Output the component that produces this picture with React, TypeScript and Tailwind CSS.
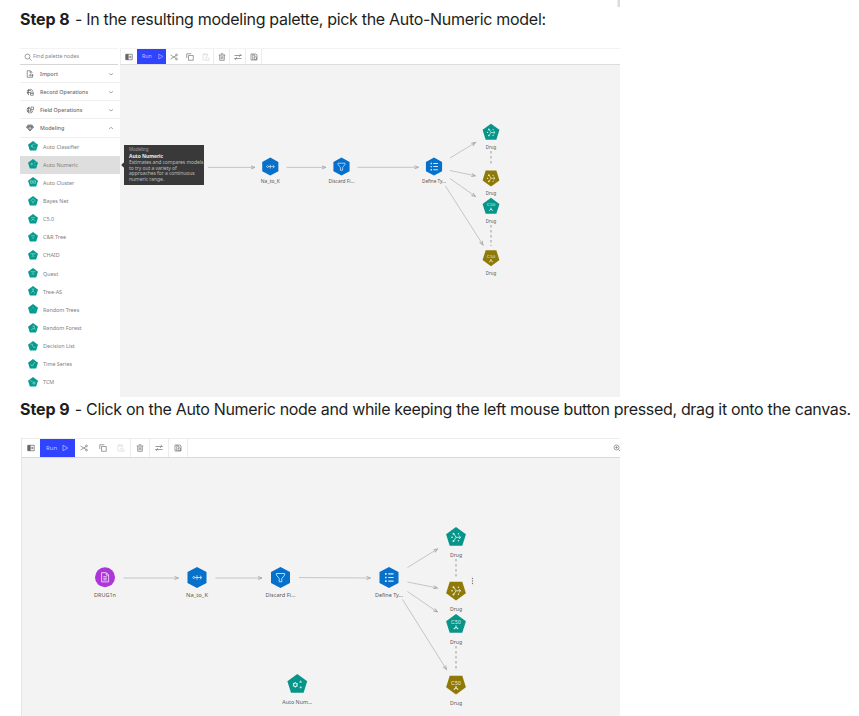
import type { ReactNode } from "react";

type Shape = "circle" | "hex" | "pent" | "nugget";
type Glyph = "doc" | "derive" | "filter" | "type" | "net" | "c50" | "gear";

const outlines: Record<Exclude<Shape, "circle">, string> = {
  hex: "0,-10.6 9.5,-5.4 9.5,5.4 0,10.6 -9.5,5.4 -9.5,-5.4",
  pent: "0,-10 9.9,-2.8 6.3,8.8 -6.3,8.8 -9.9,-2.8",
  nugget: "0,10 9.9,2.8 6.3,-8.8 -6.3,-8.8 -9.9,2.8",
};

function GlyphMark({ kind }: { kind: Glyph }) {
  switch (kind) {
    case "doc":
      return (
        <g>
          <path d="M-3.4-4.6H1.4L3.6-2.4V4.6H-3.4ZM1.2-4.4V-2.2H3.4" />
          <path d="M-1.6-.6H1.8M-1.6 1H1.8M-1.6 2.6H1.8" />
        </g>
      );
    case "derive":
      return (
        <g>
          <path d="M-2.6 0H4.6M2.9-1.8L4.8 0L2.9 1.8M0-2.3V2.3" />
          <path d="M-4.4 0L-3.2-1.3L-2 0L-3.2 1.3Z" />
        </g>
      );
    case "filter":
      return <path d="M-4.1-4H4.1V-2.4L1.3 1V4.3H-1.3V1L-4.1-2.4Z" />;
    case "type":
      return (
        <g>
          <path d="M-.8-3.6H4.6M-.8 0H4.6M-.8 3.6H4.6" strokeWidth="1.2" />
          <path d="M-4-3.6H-2.4M-4 0H-2.4M-4 3.6H-2.4" strokeWidth="1.7" />
        </g>
      );
    case "net":
      return (
        <g>
          <path d="M-2-3L0 .3L-2 3.6M0 .3H4.3M-4.6 .3H-3.4M2.8-1.5L4.8 .3L2.8 2.1" />
          <g fill="#fff" stroke="none">
            <circle cx="-2.5" cy="-3.3" r="1" />
            <circle cx="-2.5" cy="3.9" r="1" />
            <circle cx="-4" cy=".3" r=".7" />
            <circle cx="2.4" cy="-3.2" r=".7" />
            <circle cx="2.4" cy="3.8" r=".7" />
          </g>
        </g>
      );
    case "c50":
      return (
        <g>
          <text
            x="-4.9"
            y="0"
            fontSize="5"
            textLength="9.8"
            lengthAdjust="spacing"
            fontFamily="Liberation Sans, sans-serif"
            fill="#fff"
            stroke="none"
          >
            C50
          </text>
          <path d="M0 1.6V3.2L-2.2 5.2M0 3.2L2.2 5.2" strokeWidth="1.1" />
        </g>
      );
    case "gear":
      return (
        <g>
          <circle cx="-2" cy=".8" r="1.8" strokeWidth="1.1" />
          <path d="M-2-2V-.9M-2 2.5V3.6M-4.5-.6L-3.5 0M-.5 1.6L.5 2.2M-4.5 2.2L-3.5 1.6M-.5 0L.5-.6M2-1.9H4.6M3.3-3.4V-1.9M2.4 3.4H4.4M3.4 2.4V4.4" />
        </g>
      );
  }
}

interface NodeProps {
  x: number;
  y: number;
  shape: Shape;
  glyph: Glyph;
  color: string;
  label: string;
  labelWidth: number;
  scale: number;
  labelGap: number;
}

function FlowNode({ x, y, shape, glyph, color, label, labelWidth, scale, labelGap }: NodeProps) {
  return (
    <g>
      <g transform={`translate(${x} ${y}) scale(${scale})`}>
        {shape === "circle" ? <circle r="10" fill={color} /> : <polygon points={outlines[shape]} fill={color} />}
        <g fill="none" stroke="#fff" strokeWidth=".85" opacity=".85">
          <GlyphMark kind={glyph} />
        </g>
      </g>
      <text
        x={x - labelWidth / 2}
        y={y + labelGap}
        fontSize={6.1 * scale}
        textLength={labelWidth}
        lengthAdjust="spacingAndGlyphs"
        fontFamily="Noto Sans, sans-serif"
        fill="#585858"
      >
        {label}
      </text>
    </g>
  );
}

function Edge({ from, to }: { from: [number, number]; to: [number, number] }) {
  const angle = (Math.atan2(to[1] - from[1], to[0] - from[0]) * 180) / Math.PI;
  return (
    <g stroke="#bfbfbf" strokeWidth=".9" fill="none">
      <path d={`M${from[0]} ${from[1]}L${to[0]} ${to[1]}`} />
      <path d="M-4-1.5L0 0L-4 1.5" stroke="#a8a8a8" transform={`translate(${to[0]} ${to[1]}) rotate(${angle})`} />
    </g>
  );
}

function Dashes({ x, y1, y2 }: { x: number; y1: number; y2: number }) {
  return <path d={`M${x} ${y1}V${y2}`} stroke="#b0b0b0" strokeWidth="1.3" strokeDasharray="2.6 2.4" />;
}

const BLUE = "#0670cb";
const TEAL = "#079489";
const GOLD = "#8f7a07";

function Icon({ className = "", children }: { className?: string; children: ReactNode }) {
  return (
    <svg viewBox="0 0 16 16" fill="none" stroke="currentColor" strokeWidth="1.4" className={`size-2 shrink-0 ${className}`}>
      {children}
    </svg>
  );
}

const PaletteIcon = () => (
  <Icon className="text-[#666]">
    <path d="M1.5 2.5H14.5V13.5H1.5Z" />
    <path d="M2 3H6.5V13H2Z" fill="currentColor" />
    <path d="M8 8H13M10.5 5.5V10.5" />
  </Icon>
);
const CutIcon = () => (
  <Icon className="text-[#777]">
    <path d="M1 4L12.5 11M1 12L12.5 5" />
    <circle cx="13" cy="3.8" r="1.8" />
    <circle cx="13" cy="12.2" r="1.8" />
  </Icon>
);
const CopyIcon = () => (
  <Icon className="text-[#777]">
    <path d="M5 5H14.5V14.5H5ZM1.5 10V1.5H10.5" />
  </Icon>
);
const PasteIcon = () => (
  <Icon className="text-[#d8d8d8]">
    <path d="M7 14H2V2H11V6M5 2V4H8V2M8 8H11L14 11V14.5H8Z" />
  </Icon>
);
const TrashIcon = () => (
  <Icon className="text-[#6a6a6a]">
    <path d="M1.5 4H14.5M5.5 1.5H10.5M3.5 4V14.5H12.5V4M6.5 6.5V12M9.5 6.5V12" />
  </Icon>
);
const ArrangeIcon = () => (
  <Icon className="text-[#707070]">
    <path d="M1 5H15M11.5 2L15 5M15 11H1M4.5 14L1 11M11 5V7.5M5 8.5V11" />
  </Icon>
);
const NotesIcon = () => (
  <Icon className="text-[#777]">
    <path d="M2 2H12L14 4V14H2ZM5.5 2V14M8.5 8H13V13H8.5ZM8 2V6H11" />
  </Icon>
);

function RunButton({ className, iconClass }: { className: string; iconClass: string }) {
  return (
    <button className={`flex h-full shrink-0 items-center bg-[#3043ff] text-[#c3c9ff] ${className}`}>
      <span>Run</span>
      <Icon className={iconClass}>
        <path d="M4 2.5V13.5L13.5 8Z" />
      </Icon>
    </button>
  );
}

const cell = "flex h-full shrink-0 items-center justify-center";
const divider = "border-r border-[#ececec]";

function SmallToolbar() {
  return (
    <div className="flex h-[17px] border-b border-b-[#dcdcdc] border-t border-t-[#f3f3f3] bg-white">
      <div className={`${cell} w-[17px] border-l border-[#eee]`}><PaletteIcon /></div>
      <RunButton className="w-[29px] gap-[5px] pl-[5px] text-[5.3px]" iconClass="size-[7px]" />
      <div className={`${cell} w-4`}><CutIcon /></div>
      <div className={`${cell} w-4`}><CopyIcon /></div>
      <div className={`${cell} w-4 ${divider}`}><PasteIcon /></div>
      <div className={`${cell} w-4 ${divider}`}><TrashIcon /></div>
      <div className={`${cell} w-4 ${divider}`}><ArrangeIcon /></div>
      <div className={`${cell} w-4 ${divider}`}><NotesIcon /></div>
    </div>
  );
}

function LargeToolbar() {
  return (
    <div className="flex h-5 border-b border-b-[#d9d9d9] border-t border-t-[#ededed] bg-white">
      <div className={`${cell} w-[18px]`}><PaletteIcon /></div>
      <RunButton className="w-[35px] gap-1 pl-1.5 text-[6px]" iconClass="size-2" />
      <div className={`${cell} w-[18px]`}><CutIcon /></div>
      <div className={`${cell} w-[19px]`}><CopyIcon /></div>
      <div className={`${cell} w-[19px] ${divider}`}><PasteIcon /></div>
      <div className={`${cell} w-[19px] ${divider}`}><TrashIcon /></div>
      <div className={`${cell} w-[19px] ${divider}`}><ArrangeIcon /></div>
      <div className={`${cell} w-[19px] ${divider}`}><NotesIcon /></div>
      <div className="ml-auto flex w-[7px] items-center overflow-hidden">
        <Icon className="text-[#777]">
          <circle cx="7" cy="7" r="5" />
          <path d="M11 11L15.5 15.5M4.5 7H9.5M7 4.5V9.5" />
        </Icon>
      </div>
    </div>
  );
}

const groups: { name: string; open?: boolean; icon: ReactNode }[] = [
  { name: "Import", icon: <path d="M13 8V14.5H2.5V1.5H9L12.5 5M8.5 2V6H12M15 10.5H7M9.5 8L7 10.5L9.5 13" /> },
  { name: "Record Operations", icon: <path d="M6 14A6 6 0 1 1 14 6M2 5H10M2 9H8M5 2V13M9 8H14.5V14.5H9ZM9 11H14.5" /> },
  { name: "Field Operations", icon: <path d="M14 9A6 6 0 1 1 8 2M2 5H8M2 10H12M5 2V13M10 2H15V7H10ZM9 5V11" /> },
  {
    name: "Modeling",
    open: true,
    icon: <path d="M4 2H12L15 6.5L8 14L1 6.5ZM1 6.5H15M5 6.5L8 13L11 6.5L8 2ZM3 5H13" fill="currentColor" fillOpacity=".55" />,
  },
];

const models: { name: string; mark: string }[] = [
  { name: "Auto Classifier", mark: "M9 5L5 8L9 11M10 5H12M10 11H12M5 8H8" },
  { name: "Auto Numeric", mark: "M4 8H8M6 6V10M10 6H12M10 10H12" },
  { name: "Auto Cluster", mark: "M4 6H7V10H4ZM9 6H12V10H9Z" },
  { name: "Bayes Net", mark: "M8 4L11 7L8 10L5 7ZM8 10V12" },
  { name: "C5.0", mark: "M5 6H11M8 8L5 11M8 8L11 11" },
  { name: "C&R Tree", mark: "M5 6H11M8 8V11" },
  { name: "CHAID", mark: "M4 6H12M8 6V9L6 11M8 9L10 11" },
  { name: "Quest", mark: "M4 6H12M8 7V9L6 11M8 9L10 11" },
  { name: "Tree-AS", mark: "M6 5H10M8 5V8L5 11M8 8L11 11" },
  { name: "Random Trees", mark: "M8 5V7M5 9V10M11 9V10" },
  { name: "Random Forest", mark: "M7 5H10V8L5 11M10 8L12 11" },
  { name: "Decision List", mark: "M4 5H7V7M9 10H12M7 7L9 10" },
  { name: "Time Series", mark: "M4 9L7 11L11 5" },
  { name: "TCM", mark: "M4 5L7 8M8 8H11V11H8Z" },
];

function Sidebar() {
  return (
    <aside className="flex w-[100px] shrink-0 flex-col bg-white">
      <div className="mr-0.5 flex h-[17px] items-center gap-px border-b border-b-[#d6d6d6] border-t border-t-[#f3f3f3] pl-1 text-[5.3px] text-[#858585]">
        <Icon className="text-[#777]">
          <circle cx="7" cy="7" r="5" />
          <path d="M11 11L15 15" />
        </Icon>
        <span>Find palette nodes</span>
      </div>
      {groups.map((g) => (
        <div
          key={g.name}
          className="flex h-[18.15px] shrink-0 items-center border-b border-[#eee] pr-[5px] pl-1.5 text-[5.4px] font-medium text-[#6a6a6a]"
        >
          <Icon>{g.icon}</Icon>
          <span className="ml-1.5 grow">{g.name}</span>
          <Icon className="text-[#888]">
            <path d={g.open ? "M4 10L8 6.5L12 10" : "M4 6.5L8 10L12 6.5"} />
          </Icon>
        </div>
      ))}
      {models.map((m) => (
        <div
          key={m.name}
          className={`flex h-[18.15px] shrink-0 items-center gap-[5px] pl-2 text-[5.4px] text-[#808080] ${m.name === "Auto Numeric" ? "bg-[#dedede]" : ""}`}
        >
          <svg viewBox="0 0 16 16" className="-mt-px size-2.5 shrink-0" fill="none">
            <path d="M8 0L16 6L13 15H3L0 6Z" fill="#079b8f" />
            <path d={m.mark} stroke="#a4dcd6" />
          </svg>
          <span>{m.name}</span>
        </div>
      ))}
    </aside>
  );
}

function PaletteCanvas() {
  const s = 0.85;
  return (
    <svg viewBox="120 65 500 332" className="block h-[332px] w-[500px]">
      <Edge from={[208, 167.4]} to={[255, 167.4]} />
      <Edge from={[286.5, 167.4]} to={[326, 167.4]} />
      <Edge from={[357.5, 167.3]} to={[418.5, 167.3]} />
      <Edge from={[450, 158]} to={[475.5, 142.5]} />
      <Edge from={[450, 170.5]} to={[475.5, 175.8]} />
      <Edge from={[450, 178.5]} to={[475.5, 196.5]} />
      <Edge from={[445.5, 186]} to={[483, 245]} />
      <Dashes x={491} y1={151} y2={166} />
      <Dashes x={491} y1={225} y2={246} />
      <FlowNode x={270.3} y={166.6} shape="hex" glyph="derive" color={BLUE} label="Na_to_K" labelWidth={19} scale={s} labelGap={16.8} />
      <FlowNode x={341.5} y={166.6} shape="hex" glyph="filter" color={BLUE} label="Discard Fi..." labelWidth={26} scale={s} labelGap={16.8} />
      <FlowNode x={434} y={166.6} shape="hex" glyph="type" color={BLUE} label="Define Ty..." labelWidth={24} scale={s} labelGap={16.8} />
      <FlowNode x={491} y={132.2} shape="pent" glyph="net" color={TEAL} label="Drug" labelWidth={10.5} scale={s} labelGap={17} />
      <FlowNode x={491} y={178} shape="nugget" glyph="net" color={GOLD} label="Drug" labelWidth={10.5} scale={s} labelGap={17} />
      <FlowNode x={491} y={206.3} shape="pent" glyph="c50" color={TEAL} label="Drug" labelWidth={10.5} scale={s} labelGap={17} />
      <FlowNode x={491} y={257.7} shape="nugget" glyph="c50" color={GOLD} label="Drug" labelWidth={10.5} scale={s} labelGap={17} />
    </svg>
  );
}

function FlowCanvas() {
  return (
    <svg viewBox="22 458 598 258" className="block h-[258px] w-[598px]">
      <Edge from={[123.5, 578]} to={[178.5, 578]} />
      <Edge from={[215.5, 578]} to={[262, 578]} />
      <Edge from={[299, 577.6]} to={[370.5, 578]} />
      <Edge from={[407.5, 567.5]} to={[437.5, 549]} />
      <Edge from={[407.5, 582]} to={[437.5, 588]} />
      <Edge from={[407.5, 591.5]} to={[437.5, 612]} />
      <Edge from={[402.5, 599.5]} to={[446.5, 669.5]} />
      <Dashes x={456} y1={559} y2={577} />
      <Dashes x={456} y1={646} y2={670} />
      <FlowNode x={105} y={577.3} shape="circle" glyph="doc" color="#ad36d8" label="DRUG1n" labelWidth={22} scale={1} labelGap={19.8} />
      <FlowNode x={197} y={577.5} shape="hex" glyph="derive" color={BLUE} label="Na_to_K" labelWidth={22} scale={1} labelGap={19.8} />
      <FlowNode x={280.5} y={577.5} shape="hex" glyph="filter" color={BLUE} label="Discard Fi..." labelWidth={30} scale={1} labelGap={19.8} />
      <FlowNode x={389} y={577.5} shape="hex" glyph="type" color={BLUE} label="Define Ty..." labelWidth={28} scale={1} labelGap={19.8} />
      <FlowNode x={297.3} y={684} shape="pent" glyph="gear" color={TEAL} label="Auto Num..." labelWidth={30} scale={1} labelGap={20.2} />
      <FlowNode x={456} y={537} shape="pent" glyph="net" color={TEAL} label="Drug" labelWidth={12.2} scale={1} labelGap={20} />
      <FlowNode x={456} y={590.5} shape="nugget" glyph="net" color={GOLD} label="Drug" labelWidth={12.2} scale={1} labelGap={20} />
      <FlowNode x={456} y={624} shape="pent" glyph="c50" color={TEAL} label="Drug" labelWidth={12.2} scale={1} labelGap={20} />
      <FlowNode x={456} y={684.5} shape="nugget" glyph="c50" color={GOLD} label="Drug" labelWidth={12.2} scale={1} labelGap={20} />
      <g fill="#777">
        <circle cx="472.5" cy="578.5" r=".7" />
        <circle cx="472.5" cy="581" r=".7" />
        <circle cx="472.5" cy="583.5" r=".7" />
      </g>
    </svg>
  );
}

export default function App() {
  return (
    <main className="relative h-[716px] w-[859px] overflow-hidden bg-white font-['Noto_Sans',sans-serif]">
      <div className="absolute top-0 left-[617px] h-[7px] w-[3px] border-l border-[#eee] bg-[#dcdcdc]" />
      <p className="h-12 pt-[7px] pl-5 font-['Inter',sans-serif] text-[16px] leading-6 tracking-[-0.3px] whitespace-nowrap text-[#1c1e21]">
        <strong className="mr-px font-bold tracking-[-0.05px]">Step 8</strong> - In the resulting modeling palette, pick the Auto-Numeric model:
      </p>
      <section className="ml-5 flex h-[349px] w-[600px]">
        <Sidebar />
        <div className="relative w-[500px] bg-[#f3f3f3]">
          <SmallToolbar />
          <PaletteCanvas />
          <div className="absolute top-[96.5px] left-1 flex h-10 w-20 flex-col bg-[#393939] pt-px pl-[5px] text-[5px] leading-[5.5px] tracking-[-0.06px] whitespace-nowrap text-[#bcbcbc]">
            <span className="absolute top-[18px] -left-[2px] size-1 rotate-45 bg-[#393939]" />
            <div className="h-[7px] pt-[1px] text-[4.5px] text-[#a0a0a0]">Modeling</div>
            <div className="h-[7.5px] pt-px font-bold text-[#eee]">Auto Numeric</div>
            <div className="h-[5.5px]">Estimates and compares models</div>
            <div className="h-[5.5px]">to try out a variety of</div>
            <div className="h-[5.5px]">approaches for a continuous</div>
            <div className="h-[5.5px]">numeric range.</div>
          </div>
        </div>
      </section>
      <p className="h-[41px] pl-5 font-['Inter',sans-serif] text-[16px] leading-6 tracking-[-0.33px] whitespace-nowrap text-[#1c1e21]">
        <strong className="mr-px font-bold tracking-[-0.05px]">Step 9</strong> - Click on the Auto Numeric node and while keeping the left mouse button pressed, drag it onto the canvas.
      </p>
      <section className="ml-[21px] w-[599px] border-l border-[#e6e6e6] bg-[#f3f3f3]">
        <LargeToolbar />
        <FlowCanvas />
      </section>
    </main>
  );
}
